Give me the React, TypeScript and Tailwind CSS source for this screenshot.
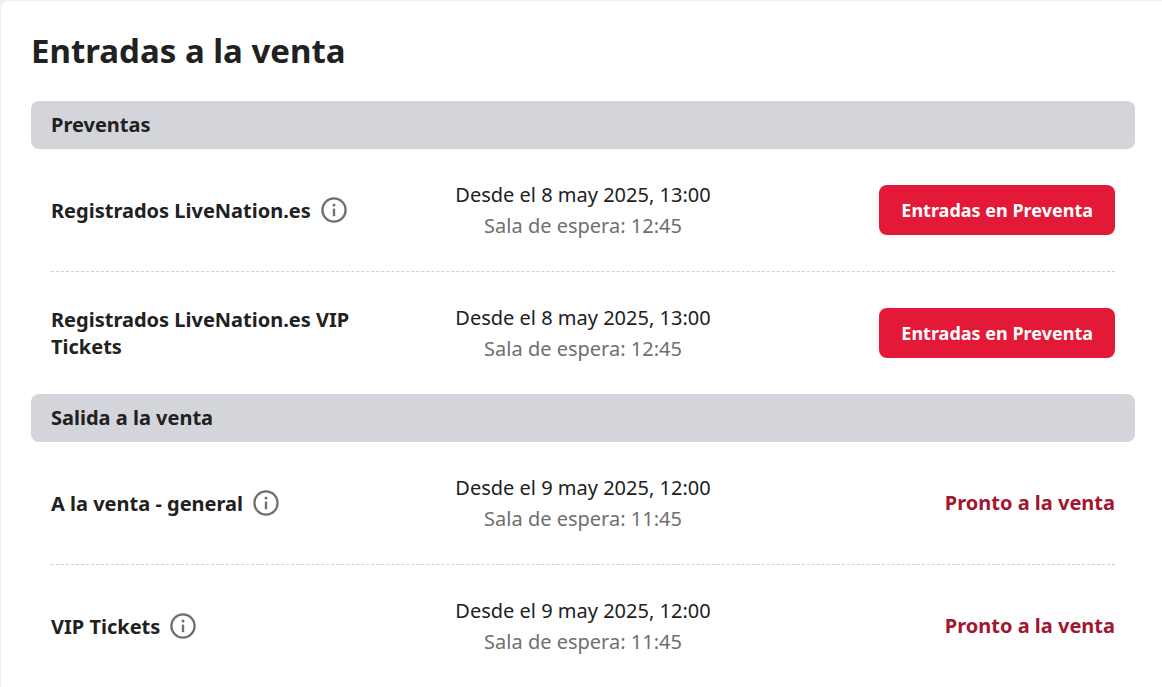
type Sale = { name: string; info: boolean; from: string; waiting: string; open: boolean };

const presales: Sale[] = [
  { name: "Registrados LiveNation.es", info: true, from: "Desde el 8 may 2025, 13:00", waiting: "Sala de espera: 12:45", open: true },
  { name: "Registrados LiveNation.es VIP Tickets", info: false, from: "Desde el 8 may 2025, 13:00", waiting: "Sala de espera: 12:45", open: true },
];

const general: Sale[] = [
  { name: "A la venta - general", info: true, from: "Desde el 9 may 2025, 12:00", waiting: "Sala de espera: 11:45", open: false },
  { name: "VIP Tickets", info: true, from: "Desde el 9 may 2025, 12:00", waiting: "Sala de espera: 11:45", open: false },
];

function InfoIcon() {
  return (
    <svg viewBox="0 0 26 26" className="size-[26px]" fill="none" aria-hidden="true">
      <circle cx="13" cy="13" r="11.6" stroke="#6f6f6f" strokeWidth="2.3" />
      <circle cx="13" cy="7.9" r="1.5" fill="#6f6f6f" />
      <path d="M13 11.6V19.2" stroke="#6f6f6f" strokeWidth="2.4" />
    </svg>
  );
}

function SaleRow({ sale }: { sale: Sale }) {
  return (
    <li className="grid grid-cols-3 items-center border-b border-dashed border-[#d0d0d0] py-[30px] last:border-b-0">
      <div className="flex items-center gap-2.5">
        <h3 className="text-xl leading-[27px] font-bold">{sale.name}</h3>
        {sale.info && (
          <button type="button" aria-label={`Información: ${sale.name}`} className="shrink-0">
            <InfoIcon />
          </button>
        )}
      </div>
      <div className="text-center text-xl leading-[31px]">
        <p>{sale.from}</p>
        <p className="text-[#6f6f6f]">{sale.waiting}</p>
      </div>
      <div className="flex justify-end">
        {sale.open ? (
          <button type="button" className="h-[50px] rounded-lg bg-[#e41937] px-[22px] text-lg font-bold text-white">
            Entradas en Preventa
          </button>
        ) : (
          <p className="text-xl font-bold text-[#a3162f]">Pronto a la venta</p>
        )}
      </div>
    </li>
  );
}

function SaleGroup({ title, sales }: { title: string; sales: Sale[] }) {
  return (
    <section>
      <h2 className="rounded-lg bg-[#d4d5db] px-5 py-2.5 text-xl leading-7 font-bold">{title}</h2>
      <ul className="px-5">
        {sales.map((sale) => (
          <SaleRow key={sale.name} sale={sale} />
        ))}
      </ul>
    </section>
  );
}

export default function App() {
  return (
    <div className="flex min-h-screen bg-[#f0f0f1] pt-px pl-px">
      <main className="flex-1 rounded-tl-lg bg-white pt-[26px] pr-[27px] pl-[30px] font-['Noto_Sans',sans-serif] text-[#212121]">
        <h1 className="mb-[26px] text-[33px] leading-[48px] font-bold">Entradas a la venta</h1>
        <SaleGroup title="Preventas" sales={presales} />
        <SaleGroup title="Salida a la venta" sales={general} />
      </main>
    </div>
  );
}
